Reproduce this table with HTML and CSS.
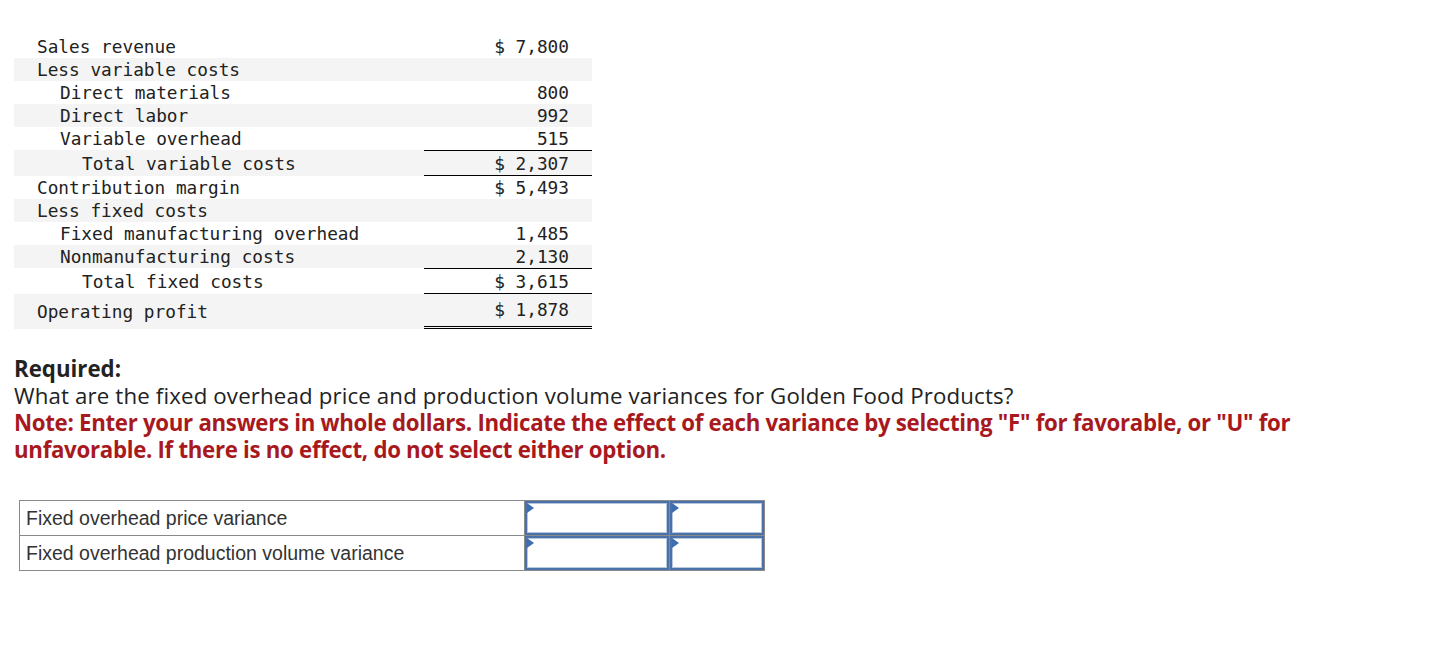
FILE: index.html
```html
<!DOCTYPE html>
<html>
<head>
<meta charset="utf-8">
<link rel="stylesheet" href="styles.css">
</head>
<body>
<div class="page">
  <table class="stmt">
    <tr><td class="lbl l0">Sales revenue</td><td class="val">$ 7,800</td></tr>
    <tr class="alt"><td class="lbl l0">Less variable costs</td><td class="val"></td></tr>
    <tr><td class="lbl l1">Direct materials</td><td class="val">800</td></tr>
    <tr class="alt"><td class="lbl l1">Direct labor</td><td class="val">992</td></tr>
    <tr><td class="lbl l1">Variable overhead</td><td class="val">515</td></tr>
    <tr class="alt total"><td class="lbl l2">Total variable costs</td><td class="val">$ 2,307</td></tr>
    <tr><td class="lbl l0">Contribution margin</td><td class="val">$ 5,493</td></tr>
    <tr class="alt"><td class="lbl l0">Less fixed costs</td><td class="val"></td></tr>
    <tr><td class="lbl l1">Fixed manufacturing overhead</td><td class="val">1,485</td></tr>
    <tr class="alt"><td class="lbl l1">Nonmanufacturing costs</td><td class="val">2,130</td></tr>
    <tr class="total"><td class="lbl l2">Total fixed costs</td><td class="val">$ 3,615</td></tr>
    <tr class="alt final"><td class="lbl l0">Operating profit</td><td class="val">$ 1,878</td></tr>
  </table>

  <div class="req">
    <div class="req-title">Required:</div>
    <div class="req-q">What are the fixed overhead price and production volume variances for Golden Food Products?</div>
    <div class="req-note">Note: Enter your answers in whole dollars. Indicate the effect of each variance by selecting "F" for favorable, or "U" for unfavorable. If there is no effect, do not select either option.</div>
  </div>

  <table class="ans">
    <tr>
      <td class="ans-lbl">Fixed overhead price variance</td>
      <td class="ans-in wide"><span class="flag"></span></td>
      <td class="ans-in narrow"><span class="flag"></span></td>
    </tr>
    <tr>
      <td class="ans-lbl">Fixed overhead production volume variance</td>
      <td class="ans-in wide"><span class="flag"></span></td>
      <td class="ans-in narrow"><span class="flag"></span></td>
    </tr>
  </table>
</div>
</body>
</html>
```

FILE: styles.css
```css
html, body {
  margin: 0;
  padding: 0;
  background: #ffffff;
}

.page {
  padding: 35px 0 0 14px;
}

.stmt {
  border-collapse: separate;
  border-spacing: 0;
  font-family: "DejaVu Sans Mono", "Liberation Mono", monospace;
  font-size: 17.75px;
  color: #222;
}

.stmt td {
  box-sizing: border-box;
  height: 23px;
  padding-top: 1px;
  padding-bottom: 0;
  line-height: 22px;
  white-space: nowrap;
}

.stmt .lbl {
  width: 410px;
}

.stmt .l0 { padding-left: 23px; }
.stmt .l1 { padding-left: 46px; }
.stmt .l2 { padding-left: 68px; }

.stmt .val {
  width: 168px;
  text-align: right;
  padding-left: 0;
  padding-right: 23px;
}

.stmt tr.alt td {
  background: #f4f4f4;
}

.stmt tr.total td {
  height: 25px;
  padding-top: 2px;
}

.stmt tr.total .val {
  border-top: 1px solid #000;
  border-bottom: 1px solid #000;
}

.stmt tr.final td {
  height: 34px;
  padding-top: 0;
  padding-bottom: 0;
  line-height: 32px;
}

.stmt tr.final .val {
  border-bottom: 3px double #000;
}

.req {
  margin-top: 26px;
  font-family: "Open Sans", "Lato", sans-serif;
  font-size: 22.25px;
  line-height: 27px;
  color: #222;
  max-width: 1300px;
}

.req-title {
  font-weight: 700;
}

.req-q {
  letter-spacing: 0.15px;
}

.req-note {
  color: #a8191e;
  font-weight: 700;
  letter-spacing: -0.3px;
}

.ans {
  margin-top: 37px;
  margin-left: 5px;
  border-collapse: collapse;
  font-family: "Liberation Sans", Arial, sans-serif;
  font-size: 19.5px;
  color: #333;
}

.ans td {
  height: 34px;
  padding: 0;
  border: 1px solid #8a8a8a;
}

.ans-lbl {
  width: 498px;
  padding-left: 6px !important;
}

.ans-in {
  position: relative;
  box-shadow: inset 0 0 0 2px #4a72a8, inset 0 0 0 3px #b7c7dd;
}

.ans-in.wide { width: 144px; }
.ans-in.narrow { width: 94px; }

.flag {
  position: absolute;
  top: 2px;
  left: 2px;
  width: 0;
  height: 0;
  border-top: 5px solid transparent;
  border-bottom: 5px solid transparent;
  border-left: 7px solid #3d6fb0;
}
```
